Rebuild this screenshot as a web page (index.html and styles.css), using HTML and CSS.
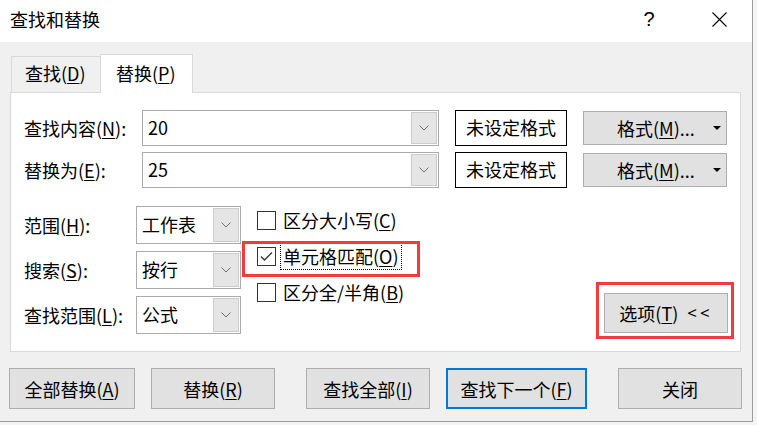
FILE: index.html
```html
<!DOCTYPE html>
<html lang="zh-CN">
<head>
    <meta charset="UTF-8">
    <meta name="viewport" content="width=device-width, initial-scale=1.0">
    <title>查找和替换</title>
    <link rel="stylesheet" href="styles.css">
</head>
<body>
    <div class="window">
        <div class="titlebar">
            <span class="title">查找和替换</span>
            <span class="help">?</span>
            <span class="close">
                <svg width="15" height="15" viewBox="0 0 15 15"><path d="M0.5 0.5 L14.5 14.5 M14.5 0.5 L0.5 14.5" stroke="#000" stroke-width="1.1" fill="none"/></svg>
            </span>
        </div>
        <div class="client">
            <div class="tabs">
                <div class="tab">查找(<u>D</u>)</div>
                <div class="tab active">替换(<u>P</u>)</div>
            </div>
            <div class="panel">
                <div class="field-row">
                    <label class="field-label">查找内容(<u>N</u>):</label>
                    <div class="combo">
                        <span class="combo-text">20</span>
                        <span class="drop"><svg width="10" height="6" viewBox="0 0 10 6"><path d="M0.5 0.5 L5 5 L9.5 0.5" stroke="#707070" fill="none"/></svg></span>
                    </div>
                    <div class="format-box">未设定格式</div>
                    <div class="btn format-btn"><span>格式(<u>M</u>)...</span><span class="caret"></span></div>
                </div>
                <div class="field-row">
                    <label class="field-label">替换为(<u>E</u>):</label>
                    <div class="combo">
                        <span class="combo-text">25</span>
                        <span class="drop"><svg width="10" height="6" viewBox="0 0 10 6"><path d="M0.5 0.5 L5 5 L9.5 0.5" stroke="#707070" fill="none"/></svg></span>
                    </div>
                    <div class="format-box">未设定格式</div>
                    <div class="btn format-btn"><span>格式(<u>M</u>)...</span><span class="caret"></span></div>
                </div>

                <div class="options">
                    <div class="selects">
                        <div class="select-row">
                            <label class="select-label">范围(<u>H</u>):</label>
                            <div class="select"><span class="select-text">工作表</span><span class="drop"><svg width="10" height="6" viewBox="0 0 10 6"><path d="M0.5 0.5 L5 5 L9.5 0.5" stroke="#707070" fill="none"/></svg></span></div>
                        </div>
                        <div class="select-row">
                            <label class="select-label">搜索(<u>S</u>):</label>
                            <div class="select"><span class="select-text">按行</span><span class="drop"><svg width="10" height="6" viewBox="0 0 10 6"><path d="M0.5 0.5 L5 5 L9.5 0.5" stroke="#707070" fill="none"/></svg></span></div>
                        </div>
                        <div class="select-row">
                            <label class="select-label">查找范围(<u>L</u>):</label>
                            <div class="select"><span class="select-text">公式</span><span class="drop"><svg width="10" height="6" viewBox="0 0 10 6"><path d="M0.5 0.5 L5 5 L9.5 0.5" stroke="#707070" fill="none"/></svg></span></div>
                        </div>
                    </div>
                    <div class="checks">
                        <div class="check-row">
                            <span class="box"></span>
                            <span class="check-label">区分大小写(<u>C</u>)</span>
                        </div>
                        <div class="check-row">
                            <span class="box"><svg width="17" height="17" viewBox="0 0 17 17"><path d="M3 8.5 L6.5 12 L14 4.5" stroke="#333" stroke-width="1.3" fill="none"/></svg></span>
                            <span class="check-label focused">单元格匹配(<u>O</u>)</span>
                            <span class="mark mark-match"></span>
                        </div>
                        <div class="check-row">
                            <span class="box"></span>
                            <span class="check-label">区分全/半角(<u>B</u>)</span>
                        </div>
                    </div>
                    <div class="opt-wrap">
                        <div class="btn opt-btn">选项(<u>T</u>)<span class="arrows">&lt;&lt;</span></div>
                        <span class="mark mark-opt"></span>
                    </div>
                </div>
            </div>

            <div class="actions">
                <div class="btn act w126">全部替换(<u>A</u>)</div>
                <div class="btn act w124 gap16">替换(<u>R</u>)</div>
                <div class="btn act w124 gap31">查找全部(<u>I</u>)</div>
                <div class="btn act w141 gap16 default">查找下一个(<u>F</u>)</div>
                <div class="btn act w124 gap31">关闭</div>
            </div>
        </div>
    </div>
</body>
</html>
```

FILE: styles.css
```css
html, body {
    margin: 0;
    padding: 0;
}
body {
    width: 757px;
    height: 425px;
    background: #f4f4f4;
    font-family: "Noto Sans CJK SC", "Noto Sans", sans-serif;
    font-size: 18px;
    color: #000;
    overflow: hidden;
}
u {
    text-underline-offset: 2px;
    text-decoration-thickness: 1px;
}
.window {
    width: 752px;
    height: 421px;
    border-right: 1px solid #9c9c9c;
    border-bottom: 1px solid #9c9c9c;
    display: flex;
    flex-direction: column;
}
.titlebar {
    height: 42px;
    background: #fff;
    display: flex;
    align-items: center;
}
.title {
    flex: 1;
    padding-left: 10px;
    line-height: 24px;
    margin-top: -4px;
}
.help {
    width: 14px;
    text-align: center;
    font-family: "Liberation Sans", sans-serif;
    font-size: 20px;
    margin-top: -3px;
}
.close {
    width: 15px;
    height: 15px;
    margin-left: 56px;
    margin-right: 25px;
    margin-top: -4px;
}
.close svg {
    display: block;
}
.client {
    flex: 1;
    background: #f0f0f0;
}
.tabs {
    display: flex;
    align-items: flex-end;
    height: 50px;
    margin-left: 11px;
}
.tab {
    box-sizing: border-box;
    height: 36px;
    width: 89px;
    padding-left: 13px;
    border-top: 1px solid #d9d9d9;
    border-left: 1px solid #d9d9d9;
    line-height: 33px;
}
.tab.active {
    width: 93px;
    height: 39px;
    margin-bottom: -1px;
    padding-left: 15px;
    background: #fff;
    border-right: 1px solid #d9d9d9;
    position: relative;
    z-index: 1;
    line-height: 37px;
}
.panel {
    box-sizing: border-box;
    width: 731px;
    height: 260px;
    margin-left: 10px;
    background: #fff;
    border: 1px solid #d9d9d9;
    padding: 17px 12px 0 13px;
}
.field-row {
    display: flex;
    align-items: center;
    height: 36px;
    margin-bottom: 6px;
}
.field-label {
    width: 118px;
    line-height: 24px;
}
.combo, .select {
    box-sizing: border-box;
    display: flex;
    border: 1px solid #ababab;
    padding: 1px;
    background: #fff;
}
.combo {
    width: 297px;
    height: 36px;
}
.combo-text, .select-text {
    flex: 1;
    display: flex;
    align-items: center;
    padding-left: 4px;
    line-height: 24px;
}
.combo-text {
    padding-bottom: 3px;
}
.drop {
    box-sizing: border-box;
    width: 26px;
    background: #e5e5e5;
    border: 1px solid #cccccc;
    display: flex;
    align-items: center;
    justify-content: center;
}
.drop svg {
    display: block;
}
.format-box {
    box-sizing: border-box;
    width: 112px;
    height: 36px;
    margin-left: 16px;
    border: 1px solid #000;
    text-align: center;
    line-height: 33px;
}
.btn {
    box-sizing: border-box;
    background: #e1e1e1;
    border: 1px solid #adadad;
    display: flex;
    align-items: center;
    justify-content: center;
    line-height: 24px;
}
.format-btn {
    width: 144px;
    height: 34px;
    margin-left: 16px;
    justify-content: flex-start;
    padding-left: 33px;
    padding-right: 5px;
}
.caret {
    margin-left: auto;
    width: 0;
    height: 0;
    border-left: 4px solid transparent;
    border-right: 4px solid transparent;
    border-top: 4px solid #000;
}
.options {
    display: flex;
    height: 128px;
    margin-top: 18px;
}
.selects {
    display: flex;
    flex-direction: column;
    gap: 7px;
}
.select-row {
    display: flex;
    align-items: center;
}
.select-label {
    width: 112px;
    line-height: 24px;
}
.select {
    width: 105px;
    height: 38px;
}
.select-text {
    padding-left: 4px;
    padding-bottom: 2px;
}
.checks {
    margin-left: 16px;
    padding-top: 5px;
    display: flex;
    flex-direction: column;
    gap: 17px;
}
.check-row {
    position: relative;
    height: 19px;
    display: flex;
    align-items: center;
}
.box {
    box-sizing: border-box;
    width: 19px;
    height: 19px;
    border: 1px solid #333;
    background: #fff;
}
.box svg {
    display: block;
}
.check-label {
    margin-left: 4px;
    padding: 0 2px;
    border: 1px solid transparent;
    line-height: 25px;
    white-space: nowrap;
}
.check-label.focused {
    border: 1px dotted #000;
}
.mark {
    position: absolute;
    box-sizing: border-box;
    border: 3px solid #f03c3c;
}
.mark-match {
    left: -15px;
    top: -6px;
    width: 178px;
    height: 36px;
}
.opt-wrap {
    position: relative;
    margin-left: auto;
    align-self: flex-end;
    margin-bottom: 1px;
}
.opt-btn {
    width: 124px;
    height: 40px;
}
.arrows {
    margin-left: 9px;
    letter-spacing: 3px;
    font-family: "Noto Sans", sans-serif;
    font-size: 17px;
}
.mark-opt {
    left: -8px;
    top: -11px;
    right: -6px;
    bottom: -6px;
}
.actions {
    display: flex;
    margin-top: 16px;
    padding-left: 9px;
}
.act {
    height: 41px;
}
.act.default {
    border: 2px solid #0078d7;
}
.w126 { width: 126px; }
.w124 { width: 124px; }
.w141 { width: 141px; }
.gap16 { margin-left: 16px; }
.gap31 { margin-left: 31px; }
```
